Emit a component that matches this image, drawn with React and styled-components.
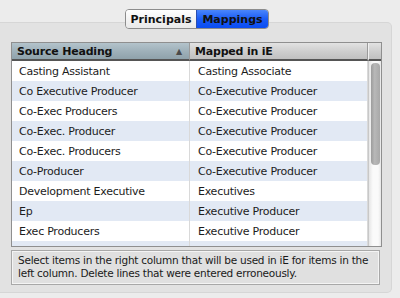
import React from "react";
import styled, { createGlobalStyle } from "styled-components";

const rows = [
  ["Casting Assistant", "Casting Associate"],
  ["Co Executive Producer", "Co-Executive Producer"],
  ["Co-Exec Producers", "Co-Executive Producer"],
  ["Co-Exec. Producer", "Co-Executive Producer"],
  ["Co-Exec. Producers", "Co-Executive Producer"],
  ["Co-Producer", "Co-Executive Producer"],
  ["Development Executive", "Executives"],
  ["Ep", "Executive Producer"],
  ["Exec Producers", "Executive Producer"],
  ["", ""],
];

const Global = createGlobalStyle`
  html, body {
    margin: 0;
    padding: 0;
    background: #ececec;
    font-family: "DejaVu Sans", "Liberation Sans", sans-serif;
    color: #1a1a1a;
  }
`;

const Window = styled.div`
  width: 400px;
  height: 298px;
  overflow: hidden;
  position: relative;
  padding-top: 22px;
  box-sizing: border-box;
`;

const Segmented = styled.div`
  position: absolute;
  top: 9px;
  left: 125px;
  display: flex;
  height: 20px;
  border: 1px solid #8c8c8c;
  border-radius: 4px;
  overflow: hidden;
  box-sizing: border-box;
  z-index: 2;
`;

const Segment = styled.div`
  display: flex;
  align-items: center;
  justify-content: center;
  width: ${(p) => p.$w}px;
  font-size: 11px;
  font-weight: bold;
  color: #111;
  background: ${(p) =>
    p.$active
      ? "linear-gradient(#4a86fb, #1a5cf5 50%, #0a4cf2)"
      : "linear-gradient(#ffffff, #f3f3f3 50%, #e9e9e9)"};
  border-left: ${(p) => (p.$active ? "1px solid #2b4fb0" : "none")};
`;

const Panel = styled.div`
  width: 392px;
  height: 271px;
  background: #e2e2e2;
  border: 1px solid #d6d6d6;
  border-left: none;
  border-radius: 0 5px 5px 0;
  box-sizing: border-box;
  padding: 19px 10px 0 11px;
  display: flex;
  flex-direction: column;
  gap: 3px;
`;

const Table = styled.div`
  width: 371px;
  height: 205px;
  border: 1px solid #8f8f8f;
  box-sizing: border-box;
  background: #fff;
  display: grid;
  grid-template-columns: 1fr 14px;
  grid-template-rows: 18px 1fr;
  overflow: hidden;
`;

const HeadCell = styled.div`
  display: flex;
  align-items: center;
  justify-content: space-between;
  width: ${(p) => p.$w}px;
  box-sizing: border-box;
  padding: 0 7px 0 5px;
  font-size: 11px;
  font-weight: bold;
  letter-spacing: -0.2px;
  background: ${(p) =>
    p.$sorted
      ? "linear-gradient(#b3c3cb, #9fb1ba 50%, #8fa2ab)"
      : "linear-gradient(#e2e2e2, #cfcfcf 50%, #c0c0c0)"};
  border-right: 1px solid #9a9a9a;
  border-bottom: 2px solid #555;
  color: #111;
`;

const HeadRow = styled.div`
  display: flex;
`;

const Corner = styled.div`
  background: linear-gradient(#e2e2e2, #cfcfcf 50%, #c0c0c0);
  border-bottom: 2px solid #555;
  border-left: 1px solid #f0f0f0;
`;

const Arrow = styled.span`
  font-size: 8px;
  color: #4a4a4a;
`;

const Body = styled.div`
  display: flex;
  flex-direction: column;
`;

const Row = styled.div`
  display: flex;
  height: 20px;
  flex-shrink: 0;
  background: ${(p) => (p.$alt ? "#e2e9f4" : "#fff")};
`;

const Cell = styled.div`
  width: ${(p) => p.$w}px;
  box-sizing: border-box;
  padding-left: ${(p) => p.$pad}px;
  display: flex;
  align-items: center;
  font-size: 11px;
  letter-spacing: -0.25px;
  color: #1c1c1c;
  border-right: 1px solid #d9d9d9;
  white-space: nowrap;
`;

const Track = styled.div`
  background: linear-gradient(90deg, #e6e6e6, #fafafa 30%, #fafafa 70%, #e0e0e0);
  border-left: 1px solid #c8c8c8;
  padding: 2px 2px 0 2px;
`;

const Thumb = styled.div`
  height: 102px;
  border-radius: 4px;
  background: linear-gradient(90deg, #9c9c9c, #b8b8b8 40%, #a8a8a8);
`;

const Info = styled.div`
  width: 369px;
  height: 35px;
  box-sizing: border-box;
  border: 1px solid #a8a8a8;
  box-shadow: inset 0 0 0 1px #f4f4f4;
  background: #e0e0e0;
  padding: 3px 5px 3px 6px;
  font-size: 10.5px;
  letter-spacing: -0.25px;
  line-height: 13px;
  color: #1a1a1a;
`;

export default function App() {
  return (
    <Window>
      <Global />
      <Segmented>
        <Segment $w={70}>Principals</Segment>
        <Segment $w={71} $active>
          Mappings
        </Segment>
      </Segmented>
      <Panel>
        <Table>
          <HeadRow>
            <HeadCell $w={178} $sorted>
              Source Heading
              <Arrow>▲</Arrow>
            </HeadCell>
            <HeadCell $w={178}>Mapped in iE</HeadCell>
          </HeadRow>
          <Corner />
          <Body>
            {rows.map((r, i) => (
              <Row key={i} $alt={i % 2 === 1}>
                <Cell $w={178} $pad={7}>
                  {r[0]}
                </Cell>
                <Cell $w={178} $pad={8}>
                  {r[1]}
                </Cell>
              </Row>
            ))}
          </Body>
          <Track>
            <Thumb />
          </Track>
        </Table>
        <Info>
          Select items in the right column that will be used in iE for items in
          the left column. Delete lines that were entered erroneously.
        </Info>
      </Panel>
    </Window>
  );
}
